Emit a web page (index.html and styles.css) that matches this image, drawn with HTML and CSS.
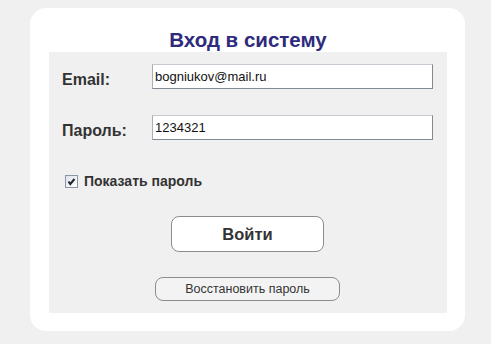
FILE: index.html
```html
<!DOCTYPE html>
<html lang="ru">
<head>
  <meta charset="UTF-8">
  <meta name="viewport" content="width=device-width, initial-scale=1.0">
  <title>Вход в систему</title>
  <link rel="stylesheet" href="styles.css">
</head>
<body>
  <div class="card">
    <h1 class="title">Вход в систему</h1>
    <form class="panel">
      <div class="field">
        <label class="field-label" for="email">Email:</label>
        <input class="field-input" id="email" type="text" value="bogniukov@mail.ru">
      </div>
      <div class="field">
        <label class="field-label" for="pass">Пароль:</label>
        <input class="field-input" id="pass" type="text" value="1234321">
      </div>
      <label class="show">
        <span class="check">
          <svg width="11" height="11" viewBox="0 0 11 11">
            <path d="M2.5 5.5 L4.3 8 L8.5 3" fill="none" stroke="#1f2430" stroke-width="2"/>
          </svg>
        </span>
        Показать пароль
      </label>
      <button class="btn btn-login" type="button">Войти</button>
      <button class="btn btn-restore" type="button">Восстановить пароль</button>
    </form>
  </div>
</body>
</html>
```

FILE: styles.css
```css
body {
  margin: 0;
  padding-top: 8px;
  background: #f0f0f0;
  font-family: "Liberation Sans", Arial, sans-serif;
}
.card {
  width: 435px;
  margin-left: 30px;
  padding: 0 18px 18px 19px;
  box-sizing: border-box;
  background: #fff;
  border-radius: 16px;
}
.title {
  margin: 0;
  padding-top: 19px;
  font-size: 20.5px;
  line-height: 25px;
  text-align: center;
  color: #2e2a7d;
}
.panel {
  display: flex;
  flex-direction: column;
  margin: 0;
  padding: 12px 14px 12px 13px;
  background: #f0f0f0;
}
.field {
  display: flex;
  align-items: center;
}
.field + .field {
  margin-top: 26px;
}
.field-label {
  width: 90px;
  padding-top: 6px;
  font-size: 16px;
  font-weight: bold;
  color: #333;
}
.field-input {
  flex: 1;
  height: 25px;
  box-sizing: border-box;
  margin: 0;
  padding: 0 2px;
  font-family: "Liberation Sans", Arial, sans-serif;
  font-size: 13px;
  color: #111;
  background: #fff;
  border: 1px solid;
  border-color: #c4cad0 #7f8a94 #7f8a94 #a9b0b8;
  outline: none;
}
.show {
  display: flex;
  align-items: center;
  gap: 6px;
  height: 16px;
  margin: 33px 0 0 3px;
  font-size: 14px;
  font-weight: bold;
  color: #333;
}
.check {
  display: flex;
  align-items: center;
  justify-content: center;
  width: 13px;
  height: 13px;
  box-sizing: border-box;
  border: 1px solid #8a96a8;
  background: linear-gradient(135deg, #dfe3ea, #fff);
}
.btn {
  align-self: center;
  box-sizing: border-box;
  padding: 0;
  font-family: "Liberation Sans", Arial, sans-serif;
  color: #333;
  background: #fff;
  border: 1px solid #8c8c8c;
}
.btn-login {
  width: 153px;
  height: 36px;
  margin-top: 27px;
  border-radius: 8px;
  font-size: 16.5px;
  font-weight: bold;
}
.btn-restore {
  width: 185px;
  height: 24px;
  margin-top: 25px;
  border-radius: 8px;
  font-size: 12.5px;
  background: #f3f3f3;
}
```
